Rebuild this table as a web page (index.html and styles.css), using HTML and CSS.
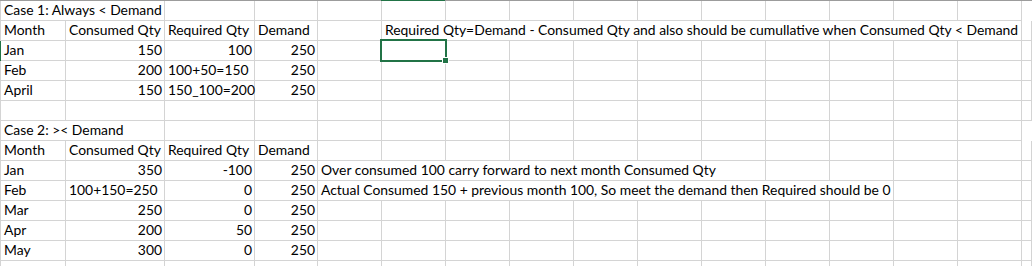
FILE: index.html
```html
<!DOCTYPE html>
<html>
<head>
<meta charset="utf-8">
<link rel="stylesheet" href="styles.css">
</head>
<body>
<div class="sheet">
  <div class="head"><div class="hcell"></div><div class="hcell"></div><div class="hcell"></div><div class="hcell"></div><div class="hcell"></div><div class="hcell active"></div></div>

  <div class="row"><div class="c s2">Case 1: Always &lt; Demand</div><div class="c"></div><div class="c"></div><div class="c"></div><div class="c"></div><div class="c"></div><div class="c"></div><div class="c"></div><div class="c"></div><div class="c"></div><div class="c"></div><div class="c"></div><div class="c"></div><div class="c"></div></div>

  <div class="row"><div class="c">Month</div><div class="c">Consumed Qty</div><div class="c">Required Qty</div><div class="c">Demand</div><div class="c"></div><div class="c s10">Required Qty=Demand - Consumed Qty and also should be cumullative when Consumed Qty &lt; Demand</div><div class="c"></div></div>

  <div class="row sel"><div class="c">Jan</div><div class="c r">150</div><div class="c r">100</div><div class="c r">250</div><div class="c"></div><div class="c selected"><span class="box"><span class="handle"></span></span></div><div class="c"></div><div class="c"></div><div class="c"></div><div class="c"></div><div class="c"></div><div class="c"></div><div class="c"></div><div class="c"></div><div class="c"></div><div class="c"></div></div>

  <div class="row"><div class="c">Feb</div><div class="c r">200</div><div class="c">100+50=150</div><div class="c r">250</div><div class="c"></div><div class="c"></div><div class="c"></div><div class="c"></div><div class="c"></div><div class="c"></div><div class="c"></div><div class="c"></div><div class="c"></div><div class="c"></div><div class="c"></div><div class="c"></div></div>

  <div class="row"><div class="c">April</div><div class="c r">150</div><div class="c">150_100=200</div><div class="c r">250</div><div class="c"></div><div class="c"></div><div class="c"></div><div class="c"></div><div class="c"></div><div class="c"></div><div class="c"></div><div class="c"></div><div class="c"></div><div class="c"></div><div class="c"></div><div class="c"></div></div>

  <div class="row"><div class="c"></div><div class="c"></div><div class="c"></div><div class="c"></div><div class="c"></div><div class="c"></div><div class="c"></div><div class="c"></div><div class="c"></div><div class="c"></div><div class="c"></div><div class="c"></div><div class="c"></div><div class="c"></div><div class="c"></div><div class="c"></div></div>

  <div class="row"><div class="c s2">Case 2: &gt;&lt; Demand</div><div class="c"></div><div class="c"></div><div class="c"></div><div class="c"></div><div class="c"></div><div class="c"></div><div class="c"></div><div class="c"></div><div class="c"></div><div class="c"></div><div class="c"></div><div class="c"></div><div class="c"></div></div>

  <div class="row"><div class="c">Month</div><div class="c">Consumed Qty</div><div class="c">Required Qty</div><div class="c">Demand</div><div class="c"></div><div class="c"></div><div class="c"></div><div class="c"></div><div class="c"></div><div class="c"></div><div class="c"></div><div class="c"></div><div class="c"></div><div class="c"></div><div class="c"></div><div class="c"></div></div>

  <div class="row"><div class="c">Jan</div><div class="c r">350</div><div class="c r">-100</div><div class="c r">250</div><div class="c s7">Over consumed 100 carry forward to next month Consumed Qty</div><div class="c"></div><div class="c"></div><div class="c"></div><div class="c"></div><div class="c"></div></div>

  <div class="row"><div class="c">Feb</div><div class="c">100+150=250</div><div class="c r">0</div><div class="c r">250</div><div class="c s9">Actual Consumed 150 + previous month 100, So meet the demand then Required should be 0</div><div class="c"></div><div class="c"></div><div class="c"></div></div>

  <div class="row"><div class="c">Mar</div><div class="c r">250</div><div class="c r">0</div><div class="c r">250</div><div class="c"></div><div class="c"></div><div class="c"></div><div class="c"></div><div class="c"></div><div class="c"></div><div class="c"></div><div class="c"></div><div class="c"></div><div class="c"></div><div class="c"></div><div class="c"></div></div>

  <div class="row"><div class="c">Apr</div><div class="c r">200</div><div class="c r">50</div><div class="c r">250</div><div class="c"></div><div class="c"></div><div class="c"></div><div class="c"></div><div class="c"></div><div class="c"></div><div class="c"></div><div class="c"></div><div class="c"></div><div class="c"></div><div class="c"></div><div class="c"></div></div>

  <div class="row"><div class="c">May</div><div class="c r">300</div><div class="c r">0</div><div class="c r">250</div><div class="c"></div><div class="c"></div><div class="c"></div><div class="c"></div><div class="c"></div><div class="c"></div><div class="c"></div><div class="c"></div><div class="c"></div><div class="c"></div><div class="c"></div><div class="c"></div></div>

  <div class="row tail"><div class="c"></div><div class="c"></div><div class="c"></div><div class="c"></div><div class="c"></div><div class="c"></div><div class="c"></div><div class="c"></div><div class="c"></div><div class="c"></div><div class="c"></div><div class="c"></div><div class="c"></div><div class="c"></div><div class="c"></div><div class="c"></div></div>
</div>
</body>
</html>
```

FILE: styles.css
```css
html, body {
  margin: 0;
  padding: 0;
  background: #ffffff;
}
body {
  width: 1032px;
  height: 266px;
  overflow: hidden;
}
.sheet {
  font-family: "Lato", "Liberation Sans", sans-serif;
  font-size: 13.9px;
  color: #000000;
}
.head, .row {
  display: grid;
  grid-template-columns: 65px 99px 90px 63px repeat(11, 64px) 1fr;
}
.head {
  height: 1px;
  background: #9c9c9c;
}
.hcell.active {
  background: #217346;
}
.row {
  height: 20px;
  box-sizing: border-box;
  border-left: 1px solid #d4d4d4;
}
.row.sel {
  border-left-color: #217346;
}
.row.tail {
  height: 5px;
}
.c {
  box-sizing: border-box;
  height: 20px;
  border-right: 1px solid #d4d4d4;
  border-bottom: 1px solid #d4d4d4;
  padding: 0 2px 3px 3px;
  display: flex;
  align-items: flex-end;
  line-height: 15px;
  white-space: nowrap;
  overflow: visible;
  position: relative;
}
.tail .c {
  height: 5px;
  border-bottom: none;
}
.c.r {
  justify-content: flex-end;
}
.s2 { grid-column: span 2; }
.s7 { grid-column: span 7; }
.s9 { grid-column: span 9; }
.s10 { grid-column: span 10; }
.selected .box {
  position: absolute;
  left: -2px;
  top: -2px;
  right: -2px;
  bottom: -2px;
  border: 2px solid #217346;
  z-index: 2;
}
.handle {
  position: absolute;
  right: -4px;
  bottom: -4px;
  width: 5px;
  height: 5px;
  background: #217346;
  border: 1px solid #ffffff;
}
```
